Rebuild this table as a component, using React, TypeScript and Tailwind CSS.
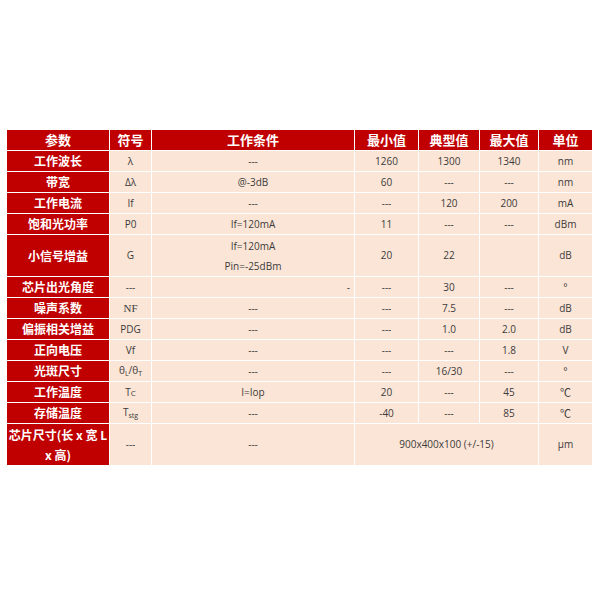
import React from "react";

type Row = {
  name: React.ReactNode;
  sym: React.ReactNode;
  cond: React.ReactNode;
  min?: string;
  typ?: string;
  max?: string;
  unit: React.ReactNode;
  merged?: string;
  condRight?: boolean;
  symSerif?: boolean;
};

const Sub = ({ children }: { children: React.ReactNode }) => (
  <span className="text-[7px] align-[-2px]">{children}</span>
);

const Celsius = () => (
  <span className="font-['Noto_Sans_CJK_SC',sans-serif] text-[11px]">℃</span>
);

const rows: Row[] = [
  { name: "工作波长", sym: "λ", cond: "---", min: "1260", typ: "1300", max: "1340", unit: "nm" },
  { name: "带宽", sym: "Δλ", cond: "@-3dB", min: "60", typ: "---", max: "---", unit: "nm" },
  { name: "工作电流", sym: "If", cond: "---", min: "---", typ: "120", max: "200", unit: "mA" },
  { name: "饱和光功率", sym: "P0", cond: "If=120mA", min: "11", typ: "---", max: "---", unit: "dBm" },
  {
    name: "小信号增益",
    sym: "G",
    cond: (
      <div className="flex flex-col items-center leading-[20px]">
        <span>If=120mA</span>
        <span>Pin=-25dBm</span>
      </div>
    ),
    min: "20",
    typ: "22",
    max: "",
    unit: "dB",
  },
  { name: "芯片出光角度", sym: "---", cond: "-", min: "---", typ: "30", max: "---", unit: "°", condRight: true },
  { name: "噪声系数", sym: "NF", cond: "---", min: "---", typ: "7.5", max: "---", unit: "dB", symSerif: true },
  { name: "偏振相关增益", sym: "PDG", cond: "---", min: "---", typ: "1.0", max: "2.0", unit: "dB" },
  { name: "正向电压", sym: "Vf", cond: "---", min: "---", typ: "---", max: "1.8", unit: "V" },
  {
    name: "光斑尺寸",
    sym: (
      <span>
        θ<Sub>L</Sub>/θ<Sub>T</Sub>
      </span>
    ),
    cond: "---",
    min: "---",
    typ: "16/30",
    max: "---",
    unit: "°",
  },
  {
    name: "工作温度",
    sym: (
      <span>
        T<span className="text-[8px]">C</span>
      </span>
    ),
    cond: "I=Iop",
    min: "20",
    typ: "---",
    max: "45",
    unit: <Celsius />,
  },
  {
    name: "存储温度",
    sym: (
      <span>
        T<Sub>stg</Sub>
      </span>
    ),
    cond: "---",
    min: "-40",
    typ: "---",
    max: "85",
    unit: <Celsius />,
  },
  {
    name: (
      <div className="flex flex-col items-center leading-[20px]">
        <span>芯片尺寸(长 x 宽 L</span>
        <span>x 高)</span>
      </div>
    ),
    sym: "---",
    cond: "---",
    unit: "μm",
    merged: "900x400x100 (+/-15)",
  },
];

const headers = ["参数", "符号", "工作条件", "最小值", "典型值", "最大值", "单位"];

const red =
  "bg-[#c00000] text-white font-bold flex items-center justify-center font-['Noto_Sans_CJK_SC','Noto_Sans',sans-serif]";
const body =
  "bg-[#fbe5d6] text-[#3b3b3b] text-[10px] flex items-center justify-center font-['Open_Sans','Noto_Sans_CJK_SC',sans-serif]";

export default function App() {
  return (
    <div className="w-[600px] h-[600px] bg-white pt-[130px] pl-[7px]">
      <div className="grid gap-px bg-white w-[585px] grid-cols-[102px_41px_202px_63px_60px_58px_53px] grid-rows-[20px_20px_20px_20px_20px_41px_20px_20px_20px_20px_20px_20px_20px_41px]">
        {headers.map((h) => (
          <div key={h} className={`${red} text-[13px]`}>
            {h}
          </div>
        ))}
        {rows.map((r, i) => (
          <React.Fragment key={i}>
            <div className={`${red} text-[12px]`}>{r.name}</div>
            <div
              className={
                r.symSerif
                  ? "bg-[#fbe5d6] text-[#3b3b3b] text-[11px] flex items-center justify-center font-['Liberation_Serif',serif]"
                  : body
              }
            >
              {r.sym}
            </div>
            <div className={r.condRight ? `${body} !justify-end pr-[4px]` : body}>{r.cond}</div>
            {r.merged ? (
              <div className={`${body} col-span-3`}>{r.merged}</div>
            ) : (
              <>
                <div className={body}>{r.min}</div>
                <div className={body}>{r.typ}</div>
                <div className={body}>{r.max}</div>
              </>
            )}
            <div className={body}>{r.unit}</div>
          </React.Fragment>
        ))}
      </div>
    </div>
  );
}
